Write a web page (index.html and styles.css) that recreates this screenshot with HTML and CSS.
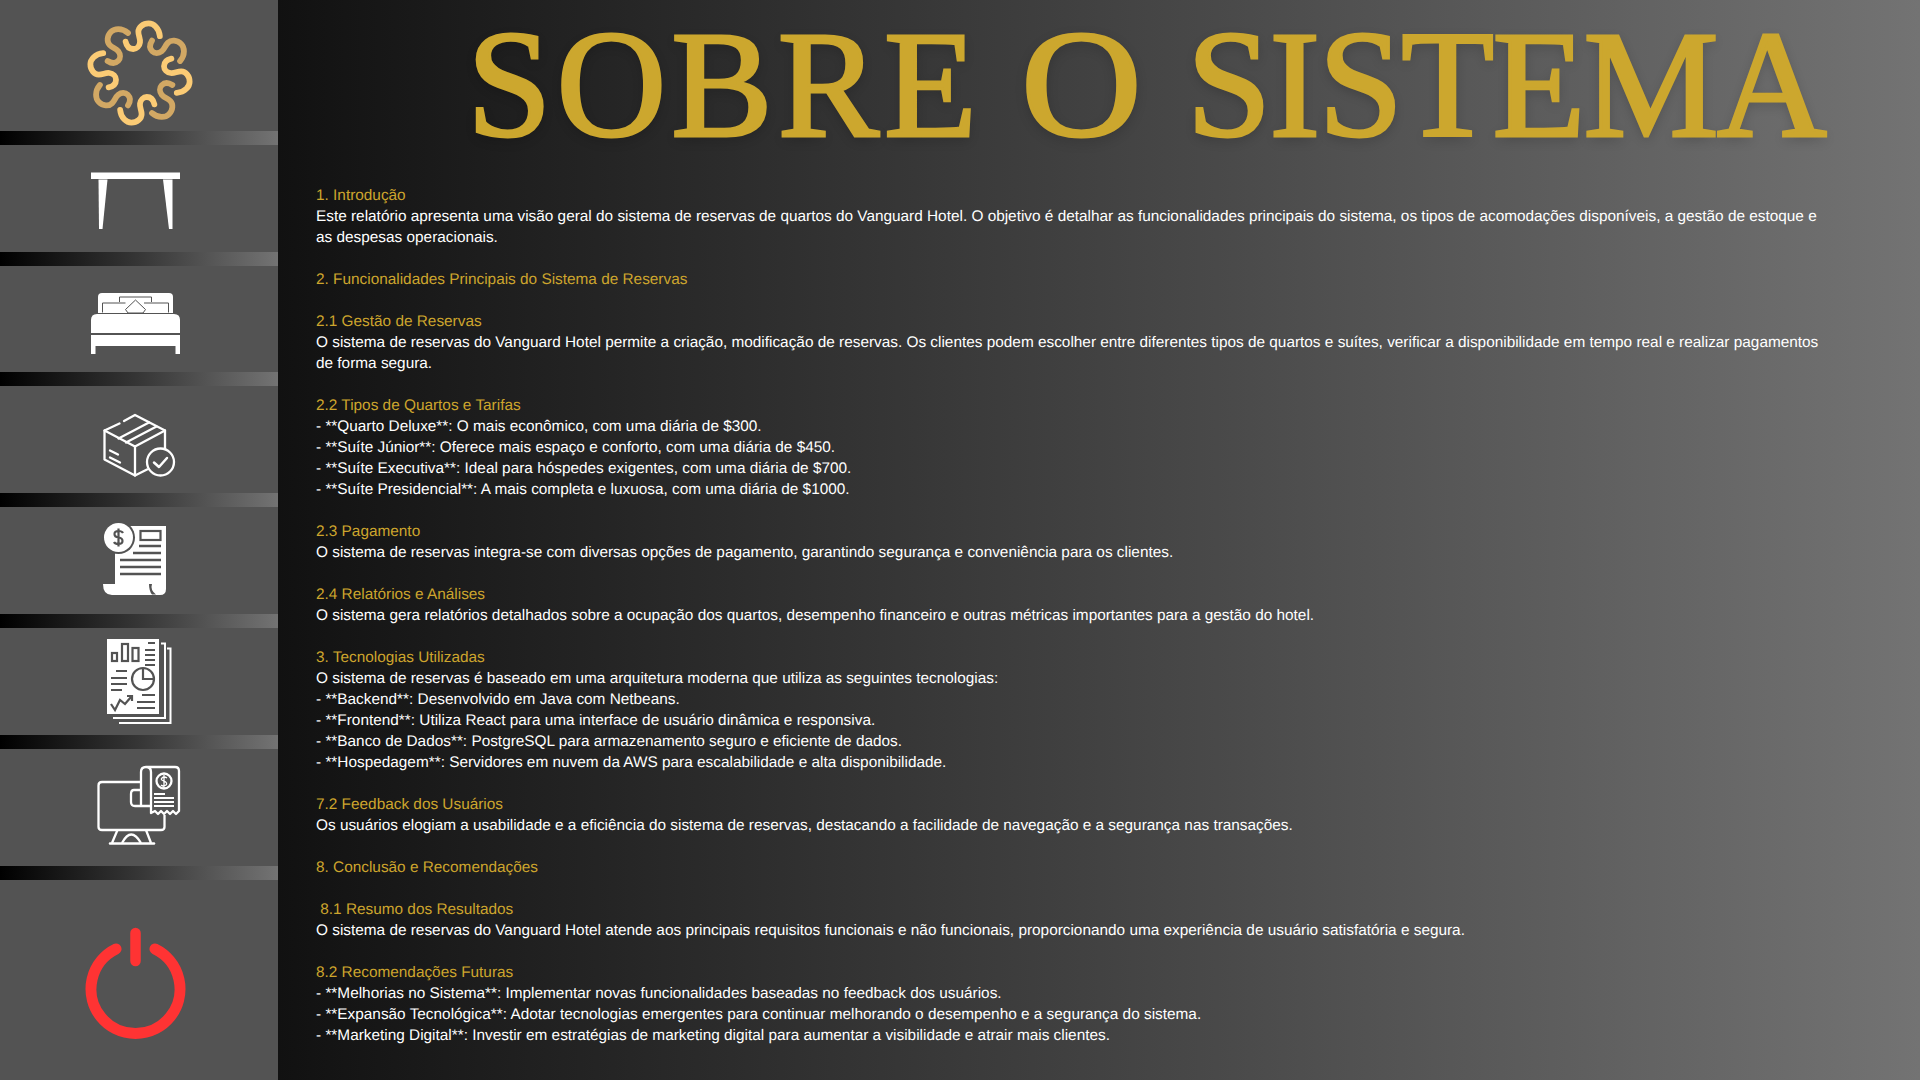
FILE: index.html
```html
<!DOCTYPE html>
<html lang="pt-BR">

<head>
    <meta charset="UTF-8">
    <meta name="viewport" content="width=device-width, initial-scale=1.0">
    <title>Sobre o Sistema</title>
    <link rel="stylesheet" href="styles.css">
</head>

<body>
    <div class="page">
        <nav class="side">
            <div class="cell c_logo">
                <svg viewBox="0 0 278 131" class="icon">
                    <defs>
                        <path id="wave" d="M20.7 -38.3C20 -47 14 -51.7 9 -51.7C3 -51.7 -1.7 -47.5 -1.7 -43C-1.7 -38.5 .5 -36 0 -32C-.5 -28 -3.5 -25 -7 -25C-11 -25 -14 -28 -15 -32.7" />
                    </defs>
                    <g transform="translate(140 73) scale(.96)" fill="none" stroke-width="6" stroke-linecap="round">
                        <use href="#wave" stroke="#fbcb75" />
                        <use href="#wave" stroke="#d2a864" transform="rotate(45)" />
                        <use href="#wave" stroke="#fbcb75" transform="rotate(90)" />
                        <use href="#wave" stroke="#d2a864" transform="rotate(135)" />
                        <use href="#wave" stroke="#fbcb75" transform="rotate(180)" />
                        <use href="#wave" stroke="#d2a864" transform="rotate(225)" />
                        <use href="#wave" stroke="#fbcb75" transform="rotate(270)" />
                        <use href="#wave" stroke="#d2a864" transform="rotate(315)" />
                    </g>
                </svg>
            </div>
            <div class="strip"></div>

            <div class="cell">
                <svg viewBox="0 145 278 107" class="icon" fill="#fff">
                    <rect x="91" y="172.500" width="89" height="6.500" />
                    <path d="M98.500 179.500H107.500L102.500 229H99Z" />
                    <path d="M163 179.500H172.500V229H169Z" />
                </svg>
            </div>
            <div class="strip"></div>

            <div class="cell c_short">
                <svg viewBox="0 266 278 106" class="icon" fill="#fff">
                    <path d="M98 313V297Q98 293 102 293H169Q173 293 173 297V313Z" />
                    <g fill="none" stroke="#535353" stroke-width="1">
                        <path d="M119.500 302V297H151.500V302" />
                        <path d="M102.500 312.500V303H125.500M144 303H168.500V312.500" />
                        <path d="M135.500 300L145.500 309.500L143 313H128L125.500 309.500Z" />
                    </g>
                    <path d="M91 333V320Q91 314 97 314H174Q180 314 180 320V333Z" />
                    <path d="M91 335H180V354H175.500V346H95.500V354H91Z" />
                </svg>
            </div>
            <div class="strip"></div>

            <div class="cell">
                <svg viewBox="0 387 278 106" class="icon" fill="none" stroke="#fff" stroke-width="2.300" stroke-linecap="round" stroke-linejoin="round">
                    <path d="M124 421.500L135 415.500L165 431V449" />
                    <path d="M119.500 424L104.500 431V460L135 476L147 470" />
                    <path d="M104.500 431L135 447L165 431" />
                    <path d="M135 447V476" />
                    <path d="M118.500 439L149 423M126 443L156.500 427" />
                    <path d="M110 451L118 455M110 458L120 463" />
                    <circle cx="160.500" cy="462.500" r="13.500" />
                    <path d="M154 463L159 467.500L167 458.500" stroke-width="2.500" />
                </svg>
            </div>
            <div class="strip"></div>

            <div class="cell">
                <svg viewBox="0 507 278 107" class="icon" fill="#fff">
                    <path d="M115 526H166V589Q166 595 160 595H113V584H115Z" />
                    <path d="M103 584H149V589Q149 595 155 595H112Q103 595 103 584Z" />
                    <path d="M149 584H152Q150 590 156 594.500H152Q149 591 149 584Z" fill="#535353" />
                    <circle cx="118.500" cy="537.500" r="16.500" fill="#535353" />
                    <circle cx="118.500" cy="537.500" r="14.500" />
                    <path d="M123 533Q122 531 118.500 531Q114.500 531 114.500 534Q114.500 537 118.500 537.500Q122.500 538 122.500 541Q122.500 544 118.500 544Q115 544 114 542M118.500 528.500V546.500" fill="none" stroke="#535353" stroke-width="2.200" />
                    <rect x="140.500" y="531" width="20" height="9" fill="none" stroke="#535353" stroke-width="2.200" />
                    <path d="M139 546H161M133 553H161M120 560H161M120 567H161M120 574H161" stroke="#535353" stroke-width="2.400" />
                </svg>
            </div>
            <div class="strip"></div>

            <div class="cell">
                <svg viewBox="0 628 278 107" class="icon">
                    <path d="M161 643.500H165V718H113M167 648.500H170.500V723H119" fill="none" stroke="#fff" stroke-width="2" />
                    <rect x="107" y="639" width="52" height="75" fill="#fff" />
                    <g fill="none" stroke="#535353" stroke-width="2.200">
                        <rect x="112" y="653" width="5" height="8" />
                        <rect x="122" y="644" width="6" height="17" />
                        <rect x="132.500" y="648" width="6" height="13" />
                        <path d="M148 643H155M145 650H155M145 655H155M145 660H155M145 665H155" />
                        <path d="M116 671H127M111 678H127M111 684H127M111 690H122" />
                        <circle cx="143" cy="679" r="11" />
                        <path d="M143 668V679H154" />
                        <path d="M111 704L115 710L120 700L125 704L131 697" />
                        <path d="M127 696H132V701" />
                        <path d="M142 695H155M137 702H155M137 708H155" />
                    </g>
                </svg>
            </div>
            <div class="strip"></div>

            <div class="cell c_tall">
                <svg viewBox="0 749 278 117" class="icon" fill="none" stroke="#fff" stroke-width="2.300" stroke-linejoin="round">
                    <path d="M141 782H102Q98.500 782 98.500 785.500V827Q98.500 830 102 830H161Q164.500 830 164.500 827V815" />
                    <path d="M117.500 830L112 843M146 830L151 843" />
                    <path d="M122 843Q131 826 141 843" />
                    <path d="M110 843.500H154" stroke-width="2.500" stroke-linecap="round" />
                    <path d="M141 805V772Q141 767 146 767Q151 767 151 772M146 767H175Q179 767 179 771V811L176 814L173 811L170 814L167 811L164 814L161 811L158 814L155 811L151 813V772" />
                    <path d="M141 790H134Q131 790 131 794V802Q131 806 135 806H150" />
                    <circle cx="164" cy="781" r="7.500" />
                    <path d="M167 778Q164 776 162 778Q160 780 164 781Q168 783 166 785Q163 787 161 785M164 775V788" stroke-width="1.300" />
                    <path d="M154 794H165M154 798H174M154 802H174M154 806H174" stroke-width="2.200" />
                </svg>
            </div>
            <div class="strip"></div>

            <div class="cell c_last">
                <svg viewBox="0 880 278 200" class="icon" fill="none" stroke="#ff3333" stroke-linecap="round">
                    <path d="M116 949A44.500 44.500 0 1 0 155 949" stroke-width="11" />
                    <path d="M135.500 933V961" stroke-width="10.500" />
                </svg>
            </div>
        </nav>

        <main class="content">
            <h1 class="title"><span class="w1">SOBRE</span> <span class="w2">O</span> <span class="w3">SISTEMA</span></h1>

            <div class="report">
                <div class="group">
                    <p class="head">1. Introdução</p>
                    <p>Este relatório apresenta uma visão geral do sistema de reservas de quartos do Vanguard Hotel. O objetivo é detalhar as funcionalidades principais do sistema, os tipos de acomodações disponíveis, a gestão de estoque e as despesas operacionais.</p>
                </div>
                <div class="group">
                    <p class="head">2. Funcionalidades Principais do Sistema de Reservas</p>
                </div>
                <div class="group">
                    <p class="head">2.1 Gestão de Reservas</p>
                    <p>O sistema de reservas do Vanguard Hotel permite a criação, modificação de reservas. Os clientes podem escolher entre diferentes tipos de quartos e suítes, verificar a disponibilidade em tempo real e realizar pagamentos de forma segura.</p>
                </div>
                <div class="group">
                    <p class="head">2.2 Tipos de Quartos e Tarifas</p>
                    <p>- **Quarto Deluxe**: O mais econômico, com uma diária de $300.</p>
                    <p>- **Suíte Júnior**: Oferece mais espaço e conforto, com uma diária de $450.</p>
                    <p>- **Suíte Executiva**: Ideal para hóspedes exigentes, com uma diária de $700.</p>
                    <p>- **Suíte Presidencial**: A mais completa e luxuosa, com uma diária de $1000.</p>
                </div>
                <div class="group">
                    <p class="head">2.3 Pagamento</p>
                    <p>O sistema de reservas integra-se com diversas opções de pagamento, garantindo segurança e conveniência para os clientes.</p>
                </div>
                <div class="group">
                    <p class="head">2.4 Relatórios e Análises</p>
                    <p>O sistema gera relatórios detalhados sobre a ocupação dos quartos, desempenho financeiro e outras métricas importantes para a gestão do hotel.</p>
                </div>
                <div class="group">
                    <p class="head">3. Tecnologias Utilizadas</p>
                    <p>O sistema de reservas é baseado em uma arquitetura moderna que utiliza as seguintes tecnologias:</p>
                    <p>- **Backend**: Desenvolvido em Java com Netbeans.</p>
                    <p>- **Frontend**: Utiliza React para uma interface de usuário dinâmica e responsiva.</p>
                    <p>- **Banco de Dados**: PostgreSQL para armazenamento seguro e eficiente de dados.</p>
                    <p>- **Hospedagem**: Servidores em nuvem da AWS para escalabilidade e alta disponibilidade.</p>
                </div>
                <div class="group">
                    <p class="head">7.2 Feedback dos Usuários</p>
                    <p>Os usuários elogiam a usabilidade e a eficiência do sistema de reservas, destacando a facilidade de navegação e a segurança nas transações.</p>
                </div>
                <div class="group">
                    <p class="head">8. Conclusão e Recomendações</p>
                </div>
                <div class="group">
                    <p class="head"> 8.1 Resumo dos Resultados</p>
                    <p>O sistema de reservas do Vanguard Hotel atende aos principais requisitos funcionais e não funcionais, proporcionando uma experiência de usuário satisfatória e segura.</p>
                </div>
                <div class="group">
                    <p class="head">8.2 Recomendações Futuras</p>
                    <p>- **Melhorias no Sistema**: Implementar novas funcionalidades baseadas no feedback dos usuários.</p>
                    <p>- **Expansão Tecnológica**: Adotar tecnologias emergentes para continuar melhorando o desempenho e a segurança do sistema.</p>
                    <p>- **Marketing Digital**: Investir em estratégias de marketing digital para aumentar a visibilidade e atrair mais clientes.</p>
                </div>
            </div>
        </main>
    </div>
</body>

</html>
```

FILE: styles.css
```css
* {
    margin: 0;
    padding: 0;
    box-sizing: border-box;
}

body {
    background-color: #111;
    overflow: hidden;
}

.page {
    display: flex;
    width: 1920px;
    height: 1080px;
}

.side {
    display: flex;
    flex-direction: column;
    flex: 0 0 278px;
    background-color: #535353;
}

.cell {
    height: 107px;
}

.c_logo {
    height: 131px;
}

.c_short {
    height: 106px;
}

.c_tall {
    height: 117px;
}

.c_last {
    height: 200px;
}

.icon {
    display: block;
    width: 278px;
    height: 100%;
}

.strip {
    height: 14px;
    background: linear-gradient(90deg, #000 0%, #363636 50%, #737373 100%);
}

.content {
    flex: 1;
    padding-left: 38px;
    background: linear-gradient(90deg, #111 0%, #737373 100%);
}

.title {
    height: 185px;
    padding-left: 151px;
    padding-top: 1px;
    font-family: "Liberation Serif", serif;
    font-size: 152px;
    line-height: 168px;
    font-weight: 400;
    white-space: nowrap;
    color: #cca72e;
    -webkit-text-stroke: 3px #cca72e;
    text-shadow: 0 4px 12px rgba(0, 0, 0, .2);
}

.w1 {
    letter-spacing: 5px;
}

.w2 {
    display: inline-block;
    margin-left: 1px;
    transform: scaleX(1.1);
    transform-origin: left;
}

.w3 {
    margin-left: 18px;
    letter-spacing: -1.7px;
}

.report {
    width: 1510px;
    font-family: "Liberation Sans", sans-serif;
    font-size: 15.37px;
    line-height: 21px;
    text-rendering: geometricPrecision;
    color: #fff;
}

.group {
    margin-bottom: 21px;
}

.head {
    color: #cda52d;
    white-space: pre-wrap;
}
```
